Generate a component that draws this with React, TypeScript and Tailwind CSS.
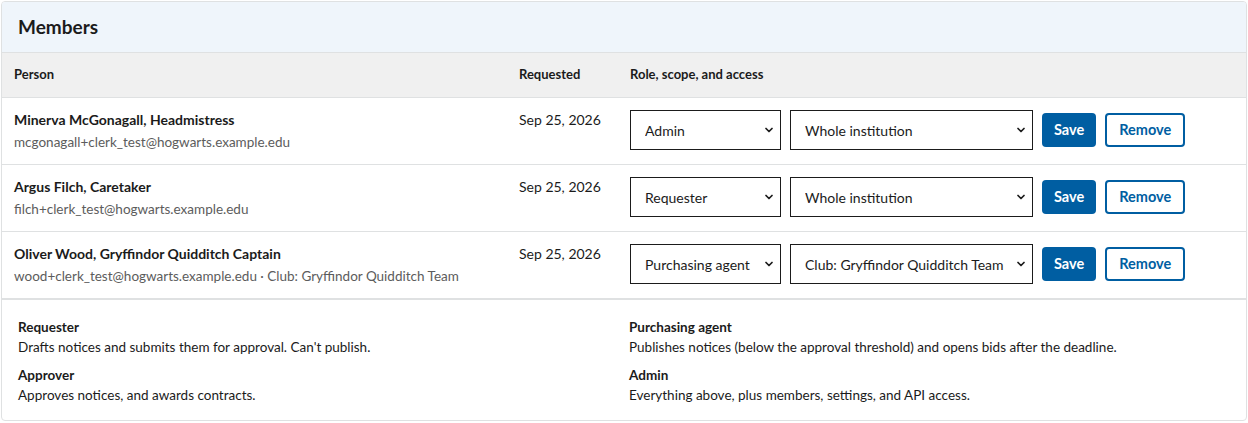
import { ChevronDown } from "lucide-react";

const members = [
  {
    name: "Minerva McGonagall, Headmistress",
    email: "mcgonagall+clerk_test@hogwarts.example.edu",
    date: "Sep 25, 2026",
    role: "Admin",
    scope: "Whole institution",
  },
  {
    name: "Argus Filch, Caretaker",
    email: "filch+clerk_test@hogwarts.example.edu",
    date: "Sep 25, 2026",
    role: "Requester",
    scope: "Whole institution",
  },
  {
    name: "Oliver Wood, Gryffindor Quidditch Captain",
    email: "wood+clerk_test@hogwarts.example.edu · Club: Gryffindor Quidditch Team",
    date: "Sep 25, 2026",
    role: "Purchasing agent",
    scope: "Club: Gryffindor Quidditch Team",
  },
];

const roles = ["Requester", "Approver", "Purchasing agent", "Admin"];
const scopes = ["Whole institution", "Club: Gryffindor Quidditch Team"];

const legend = [
  { title: "Requester", text: "Drafts notices and submits them for approval. Can't publish." },
  { title: "Purchasing agent", text: "Publishes notices (below the approval threshold) and opens bids after the deadline." },
  { title: "Approver", text: "Approves notices, and awards contracts." },
  { title: "Admin", text: "Everything above, plus members, settings, and API access." },
];

function Select({ value, options, width }: { value: string; options: string[]; width: string }) {
  return (
    <div className={`relative ${width}`}>
      <select
        defaultValue={value}
        className="h-10 w-full appearance-none border border-[#1b1b1b] bg-white pl-[14px] pr-[22px] text-[14px] text-[#1b1b1b] outline-none"
      >
        {options.map((o) => (
          <option key={o}>{o}</option>
        ))}
      </select>
      <ChevronDown
        className="pointer-events-none absolute right-[6px] top-1/2 -translate-y-1/2 text-[#1b1b1b]"
        size={12}
        strokeWidth={3.5}
      />
    </div>
  );
}

export default function App() {
  return (
    <div className="bg-white p-[1px] font-['Lato',sans-serif] text-[#1b1b1b]">
      <div className="overflow-hidden rounded-[4px] border border-[#dfe1e2]">
        {/* Title band */}
        <div className="flex h-[51px] items-center border-b border-[#dfe1e2] bg-[#eff5fb] px-4">
          <h2 className="text-[19px] font-bold">Members</h2>
        </div>

        {/* Table header */}
        <div className="grid h-[45px] grid-cols-[505px_111px_1fr] items-center border-b border-[#dfe1e2] bg-[#f0f0f0] px-3 text-[13px] font-bold">
          <div>Person</div>
          <div>Requested</div>
          <div>Role, scope, and access</div>
        </div>

        {/* Rows */}
        {members.map((m) => (
          <div
            key={m.name}
            className="grid h-[67px] grid-cols-[505px_111px_1fr] border-b border-[#dfe1e2] px-3 pt-3"
          >
            <div>
              <div className="text-[14px] font-bold leading-5">{m.name}</div>
              <div className="mt-[2px] text-[13.5px] leading-5 text-[#5c5c5c]">{m.email}</div>
            </div>
            <div className="text-[14px] leading-5">{m.date}</div>
            <div className="flex items-start gap-[9px]">
              <Select value={m.role} options={roles} width="w-[151px]" />
              <Select value={m.scope} options={scopes} width="w-[243px]" />
              <button className="mt-[3px] h-[34px] rounded-[4px] bg-[#005ea2] px-3 text-[14.5px] font-bold text-white">
                Save
              </button>
              <button className="mt-[3px] h-[34px] rounded-[4px] border-2 border-[#005ea2] bg-white px-3 text-[14.5px] font-bold text-[#005ea2]">
                Remove
              </button>
            </div>
          </div>
        ))}

        {/* Legend */}
        <div className="grid grid-cols-[611px_1fr] gap-y-[8px] border-t border-[#dfe1e2] px-4 pb-[15px] pt-[17px] text-[13.5px]">
          {legend.map((l) => (
            <div key={l.title}>
              <div className="font-bold leading-5">{l.title}</div>
              <div className="leading-5">{l.text}</div>
            </div>
          ))}
        </div>
      </div>
    </div>
  );
}
